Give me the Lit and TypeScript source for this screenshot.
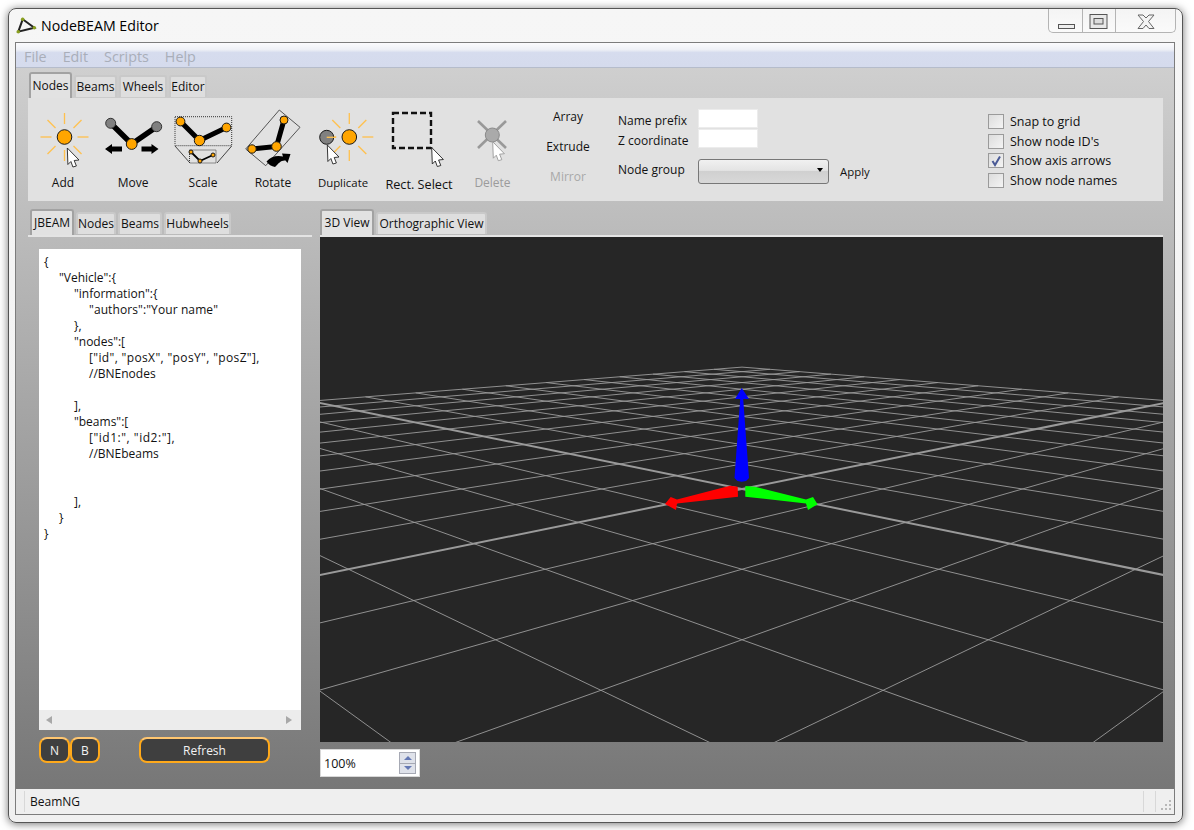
import { LitElement, html, css, svg } from "lit";
import { customElement } from "lit/decorators.js";

const cursor = (x: number, y: number, stroke = "#222", fill = "#fff") => svg`<path d="M${x} ${y} l11.7 12 l-4.8 .5 l2.2 5.5 l-3.5 1 l-2 -5.5 l-3 3 Z" fill=${fill} stroke=${stroke} stroke-width="0.9" stroke-linejoin="round"/>`;
const node = (x: number, y: number, r: number, fill = "#ffa500", stroke = "#1a1a1a") => svg`<circle cx=${x} cy=${y} r=${r} fill=${fill} stroke=${stroke} stroke-width="1"/>`;
const rays = (x: number, y: number) => {
  const o = [[0, -13, 0, -24], [0, 13, 0, 24], [-13, 0, -24, 0], [13, 0, 24, 0], [-9, -9, -17, -17], [9, -9, 17, -17], [-9, 9, -17, 17], [9, 9, 17, 17]];
  return o.map(([a, b, c, d]) => svg`<line x1=${x + a} y1=${y + b} x2=${x + c} y2=${y + d} stroke="#ffc04d" stroke-width="1.3"/>`);
};

const icons: Record<string, any> = {
  add: svg`<svg width="70" height="64" viewBox="28 106 70 64">${rays(64.5, 137)}${node(64.5, 137, 7.3)}${cursor(67.3, 148)}</svg>`,
  move: svg`<svg width="70" height="64" viewBox="98 106 70 64">
    <path d="M110.7 123.3 L131.7 144 L156.7 126.7" fill="none" stroke="#000" stroke-width="5.5"/>
    ${node(110.7, 123.3, 5, "#808080", "#333")}${node(156.7, 126.7, 5, "#808080", "#333")}${node(131.7, 144, 5.4)}
    <path d="M105 149 l7 -5 v2.5 h10 v5 h-10 v2.5 Z M158.5 149 l-7 -5 v2.5 h-10 v5 h10 v2.5 Z" fill="#000"/></svg>`,
  scale: svg`<svg width="70" height="64" viewBox="168 106 70 64">
    <rect x="175" y="116.7" width="56.7" height="29" fill="none" stroke="#333" stroke-width="1" stroke-dasharray="1 1"/>
    <path d="M175 146 L190 163 M231.7 146 L217 163" stroke="#444" stroke-width="1" fill="none"/>
    <rect x="189.5" y="150" width="26.5" height="13" fill="none" stroke="#333" stroke-width="1" stroke-dasharray="1 1"/>
    <path d="M180.5 121.5 L199.5 140.5 L226.5 127.5" fill="none" stroke="#000" stroke-width="5"/>
    <path d="M191 152 L200 161 L213 155" fill="none" stroke="#000" stroke-width="1.8"/>
    ${node(180.5, 121.5, 4.4)}${node(199.5, 140.5, 5.2)}${node(226.5, 127.5, 4.4)}
    ${node(191, 152, 2)}${node(200, 161, 2)}${node(213, 155, 2)}</svg>`,
  rotate: svg`<svg width="70" height="64" viewBox="238 106 70 64">
    <path d="M279.3 110 L300 127.3 L265.7 165.7 L245.7 149 Z" fill="none" stroke="#444" stroke-width="0.9"/>
    <path d="M284 120 L276.5 146.5 L252 149" fill="none" stroke="#000" stroke-width="5"/>
    ${node(284, 120, 4)}${node(276.5, 146.5, 4.8)}${node(252, 149, 4.2)}
    <path d="M266.5 161.5 C271 156.5 277 155 283 156.5 L282 153.5 L290.5 154 L287.5 163 L285.5 160.5 C281 160 279 163 275 167 C271.5 166.5 268.5 164.5 266.5 161.5 Z" fill="#000"/></svg>`,
  duplicate: svg`<svg width="70" height="64" viewBox="308 106 70 64">${rays(349.3, 137)}${node(326.7, 137.3, 7, "#808080")}
    <line x1="326.7" y1="137.3" x2="336" y2="137.3" stroke="#ffc04d" stroke-width="1.3"/>${node(349.3, 137, 7.3)}${cursor(327.3, 145)}</svg>`,
  rect: svg`<svg width="82" height="64" viewBox="378 106 82 64">
    <rect x="393" y="113" width="38" height="35" fill="none" stroke="#111" stroke-width="2.4" stroke-dasharray="6 3"/>${cursor(431.7, 147.5)}</svg>`,
  del: svg`<svg width="65" height="64" viewBox="460 106 65 64">
    <path d="M478 121 L506 148 M506 121 L478 148" stroke="#999" stroke-width="2.6"/>
    <circle cx="492.3" cy="135" r="7" fill="#aaa" stroke="#8a8a8a" stroke-width="1"/>${cursor(492.7, 141.7, "#999")}</svg>`,
};

const tools = [
  ["add", "Add", 70, ""], ["move", "Move", 70, ""], ["scale", "Scale", 70, ""], ["rotate", "Rotate", 70, ""],
  ["duplicate", "Duplicate", 70, "dup"], ["rect", "Rect. Select", 82, "low"], ["del", "Delete", 65, "off"],
];

const code: [number, string, string?][] = [
  [0, "{"], [1, '"Vehicle":{'], [2, '"information":{'], [3, '"authors":"Your name"', "wa"], [2, "},"], [2, '"nodes":['],
  [3, '["id", "posX", "posY", "posZ"],', "wb"], [3, "//BNEnodes"], [3, ""], [2, "],"], [2, '"beams":['], [3, '["id1:", "id2:"],', "wc"],
  [3, "//BNEbeams"], [3, ""], [3, ""], [2, "],"], [1, "}"], [0, "}"],
];

function grid() {
  const N = 11, yh = 290, G = 0.3523, A = 0.005025, S = 0.000361, cx = 742, minW = 0.0014;
  const P = (u: number, v: number) => { const w = A + S * (u + v); return [cx + (G * (u - v)) / w, yh + 1 / w]; };
  const out: any[] = [];
  for (let i = -N; i <= N; i++) {
    const start = Math.max(-N, (minW - A) / S - i);
    const cls = i === 0 ? "axis" : "thin";
    const a = P(i, start), b = P(i, N), c = P(start, i), d = P(N, i);
    out.push(svg`<line class=${cls} x1=${a[0]} y1=${a[1]} x2=${b[0]} y2=${b[1]}/>`);
    out.push(svg`<line class=${cls} x1=${c[0]} y1=${c[1]} x2=${d[0]} y2=${d[1]}/>`);
  }
  return out;
}

@customElement("tab-bar")
class TabBar extends LitElement {
  static properties = { items: { type: Array }, widths: { type: Array } };
  items: string[] = [];
  widths: number[] = [];
  static styles = css`
    :host { display: flex; align-items: flex-end; gap: 2px; height: 26px; font: 12px "Open Sans", sans-serif; color: #111; }
    .t { box-sizing: border-box; height: 22px; display: flex; align-items: center; justify-content: center; background: #dedede; border: 2px solid #c9c9c9; border-bottom: 0; border-radius: 3px 3px 0 0; white-space: nowrap; margin-bottom: 1px; padding-bottom: 2px; }
    .t.on { height: 26px; background: #e2e2e2; border-color: #a2a2a2; margin-bottom: 0; padding-bottom: 1px; }
  `;
  render() {
    return this.items.map((t, i) => html`<div class="t ${i === 0 ? "on" : ""}" style="width:${this.widths[i]}px">${t}</div>`);
  }
}

@customElement("app-root")
class AppRoot extends LitElement {
  static styles = css`
    :host { display: block; width: 1194px; height: 830px; background: #fff; font: 12px "Open Sans", sans-serif; color: #111; overflow: hidden; }
    .page { padding: 8px 11px 7px 8px; width: 1194px; height: 830px; box-sizing: border-box; }
    .window { box-sizing: border-box; height: 815px; border: 1px solid #555; border-radius: 8px; background: linear-gradient(#f6f6f6, #f0f0f0); box-shadow: 0 1px 8px rgba(0,0,0,.55); padding: 0 7px 7px 6px; display: flex; flex-direction: column; }
    .titlebar { height: 33px; flex: none; display: flex; align-items: flex-start; }
    .title { display: flex; align-items: center; gap: 4px; height: 33px; font-size: 14.2px; color: #000; flex: 1; }
    .ctrl { display: flex; height: 23px; border: 1px solid #b4b4b4; border-top: 0; border-radius: 0 0 5px 5px; margin-right: -1px; background: linear-gradient(#f4f4f4, #fafafa); }
    .ctrl div { display: flex; align-items: center; justify-content: center; border-right: 1px solid #b4b4b4; }
    .ctrl div:last-child { border-right: 0; }
    .w1 { width: 33px; } .w2 { width: 32px; } .w3 { width: 59px; }
    .client { flex: 1; display: flex; flex-direction: column; border: 1px solid #7c7c7c; min-height: 0; }
    .menu { height: 25px; flex: none; box-sizing: border-box; border-bottom: 1px solid #b5bccb; background: linear-gradient(#fbfbfd 0, #eef0f6 28%, #d6dcee 40%, #d5dbed 100%); display: flex; gap: 16px; padding: 3px 0 0 8px; font-size: 14.3px; color: #a9aeb9; align-items: center; }
    .main { flex: 1; min-height: 0; display: flex; flex-direction: column; background: linear-gradient(#cfcfcf, #777); padding: 4px 11px 0 12px; }
    .tabs-top { padding-left: 1px; }
    .toolbar { height: 103px; flex: none; background: #e1e1e1; display: flex; }
    .tool { flex: none; display: flex; flex-direction: column; align-items: center; padding-top: 8px; box-sizing: border-box; }
    .tool svg { display: block; flex: none; }
    .tool span { margin-top: 5px; line-height: 16px; white-space: nowrap; }
    .tool.low span { margin-top: 6px; font-size: 12.7px; }
    .tool.dup span { font-size: 11.4px; }
    .tool.off span { color: #9b9b9b; }
    .w70 { width: 70px; } .w82 { width: 82px; } .w65 { width: 65px; }
    .acts { width: 86px; flex: none; display: flex; flex-direction: column; align-items: center; padding-top: 11px; box-sizing: border-box; }
    .acts div { height: 30px; line-height: 16px; }
    .acts .off { color: #a8a8a8; }
    .form { margin-left: 7px; padding-top: 11px; display: grid; grid-template-columns: 80px 131px auto; grid-template-rows: 20px 20px 35px; grid-auto-rows: 20px; align-items: start; align-content: start; }
    .form .inp { width: 60px; height: 19px; background: #fff; border: 1px solid #ececec; box-sizing: border-box; }
    .form .sel { grid-row: 3; grid-column: 2; height: 25px; box-sizing: border-box; border: 1px solid #777; border-radius: 3px; background: linear-gradient(#f1f1f1, #e4e4e4 45%, #d0d0d0 50%, #d8d8d8); display: flex; align-items: center; justify-content: flex-end; padding-right: 5px; margin-top: 10px; }
    .arrow { width: 0; height: 0; border: 3.5px solid transparent; border-top: 4px solid #000; border-bottom: 0; margin-top: -3px; }
    .form .lbl { white-space: nowrap; line-height: 16px; padding-top: 4px; }
    .form .lblg { grid-row: 3; grid-column: 1; padding-top: 0; margin-top: 13px; }
    .form .apply { grid-row: 3; grid-column: 3; margin: 15px 0 0 11px; font-size: 11.4px; line-height: 16px; }
    .checks { margin-left: auto; width: 175px; flex: none; padding-top: 14px; display: flex; flex-direction: column; font-size: 12.5px; }
    .chk { height: 19.6px; display: flex; align-items: center; gap: 6px; white-space: nowrap; }
    .box { width: 16px; height: 15px; box-sizing: border-box; border: 1px solid #9a9a9a; background: linear-gradient(135deg, #dcdcdc, #f4f4f4); display: flex; align-items: center; justify-content: center; }
    .body { flex: 1; min-height: 0; display: flex; gap: 8px; padding-top: 8px; }
    .left { width: 284px; flex: none; display: flex; flex-direction: column; }
    .right { flex: 1; display: flex; flex-direction: column; min-width: 0; }
    .rule { height: 2px; background: #e4e4e4; flex: none; }
    .left .tabs { padding-left: 2px; }
    .right .tabs { padding-left: 0; }
    .editor { margin: 12px 0 0 11px; width: 262px; height: 481px; flex: none; background: #fff; display: flex; flex-direction: column; box-sizing: border-box; }
    .codebox { flex: 1; padding: 5px 0 0 5px; }
    .ln { height: 16px; line-height: 16px; white-space: pre; color: #111; }
    .wa { letter-spacing: .1px; } .wb { letter-spacing: .36px; } .wc { letter-spacing: .53px; }
    .l1 { padding-left: 15px; } .l2 { padding-left: 30px; } .l3 { padding-left: 45px; }
    .hbar { height: 20px; background: #ececec; display: flex; align-items: center; justify-content: space-between; padding: 0 9px 0 7px; flex: none; }
    .la { border: 4px solid transparent; border-left: 0; border-right: 6px solid #a8a8a8; }
    .ra { border: 4px solid transparent; border-right: 0; border-left: 6px solid #a8a8a8; }
    .btns { display: flex; margin: 7px 0 0 11px; }
    .pill { box-sizing: border-box; height: 26px; background: #3f3f3f; color: #f2f2f2; border: 2px solid #ffa91a; border-top-color: #ffc670; border-radius: 8px; display: flex; align-items: center; justify-content: center; }
    .n { width: 31px; } .b { width: 30px; } .r { width: 131px; margin-left: 39px; }
    .canvas { height: 505px; flex: none; background: #262626; display: block; }
    .canvas .thin { stroke: #9c9c9c; stroke-width: .9; }
    .canvas .axis { stroke: #9a9a9a; stroke-width: 2; }
    .spin { margin-top: 7px; width: 100px; height: 28px; box-sizing: border-box; background: #fff; border: 1px solid #d8d8d8; display: flex; align-items: center; justify-content: space-between; padding: 0 3px; }
    .spin .s { font-size: 12.5px; }
    .sbtn { width: 17px; height: 22px; box-sizing: border-box; border: 1px solid #a6a9b4; display: flex; flex-direction: column; background: #dfe2ea; }
    .sbtn i { flex: 1; display: flex; align-items: center; justify-content: center; border-bottom: 1px solid #a6a9b4; }
    .sbtn i:last-child { border-bottom: 0; }
    .up { border: 4px solid transparent; border-top: 0; border-bottom: 4px solid #6478b4; }
    .dn { border: 4px solid transparent; border-bottom: 0; border-top: 4px solid #6478b4; }
    .status { height: 25px; flex: none; background: #efefef; display: flex; align-items: center; }
    .sep { width: 1px; height: 21px; background: #d8d8d8; flex: none; }
    .pad { width: 8px; }
    .status .txt { flex: 1; padding-left: 5px; font-size: 12px; }
    .cell { width: 11px; }
    .grip { width: 18px; height: 21px; display: flex; align-items: flex-end; }
  `;

  render() {
    return html`<div class="page"><div class="window">
      <div class="titlebar">
        <div class="title">
          <svg width="22" height="22" viewBox="15 14 22 22"><path d="M22.7 18.3 L34.3 26.7 L18.3 30.7 Z" fill="none" stroke="#222" stroke-width="2"/><circle cx="22.7" cy="18.3" r="1.8" fill="#8aa020"/><circle cx="34.3" cy="26.7" r="1.8" fill="#8aa020"/><circle cx="18.3" cy="30.7" r="1.8" fill="#8aa020"/></svg>
          <span>NodeBEAM Editor</span>
        </div>
        <div class="ctrl">
          <div class="w1"><svg width="33" height="22" viewBox="0 0 33 22"><rect x="9.5" y="14.5" width="16" height="4" fill="#eee" stroke="#555"/></svg></div>
          <div class="w2"><svg width="32" height="22" viewBox="0 0 32 22"><rect x="7" y="4.5" width="17" height="14" fill="#e8e8e8" stroke="#555"/><rect x="11" y="8.5" width="9" height="5.5" fill="#ddd" stroke="#555"/></svg></div>
          <div class="w3"><svg width="59" height="22" viewBox="0 0 59 22"><path d="M22 5 h5 l3 3 l3 -3 h5 l-5.5 6.5 l5.5 7 h-5 l-3 -3.5 l-3 3.5 h-5 l5.5 -7 Z" fill="#f4f4f4" stroke="#666"/></svg></div>
        </div>
      </div>
      <div class="client">
        <div class="menu"><span>File</span><span>Edit</span><span>Scripts</span><span>Help</span></div>
        <div class="main">
          <tab-bar class="tabs-top" .items=${["Nodes", "Beams", "Wheels", "Editor"]} .widths=${[43, 43, 48, 38]}></tab-bar>
          <div class="toolbar">
            ${tools.map(([k, l, w, c]) => html`<div class="tool w${w} ${c}">${icons[k as string]}<span>${l}</span></div>`)}
            <div class="acts"><div>Array</div><div>Extrude</div><div class="off">Mirror</div></div>
            <div class="form">
              <div class="lbl">Name prefix</div><div class="inp"></div><div></div>
              <div class="lbl">Z coordinate</div><div class="inp"></div><div></div>
              <div class="lbl lblg">Node group</div><div class="sel"><span class="arrow"></span></div><div class="apply">Apply</div>
            </div>
            <div class="checks">
              <div class="chk"><span class="box"></span>Snap to grid</div>
              <div class="chk"><span class="box"></span>Show node ID's</div>
              <div class="chk"><span class="box"><svg width="12" height="12" viewBox="0 0 12 12"><path d="M2.5 6 L5 10 L10 1.5" fill="none" stroke="#4a5a96" stroke-width="2"/></svg></span>Show axis arrows</div>
              <div class="chk"><span class="box"></span>Show node names</div>
            </div>
          </div>
          <div class="body">
            <div class="left">
              <tab-bar class="tabs" .items=${["JBEAM", "Nodes", "Beams", "Hubwheels"]} .widths=${[44, 40, 44, 67]}></tab-bar>
              <div class="rule"></div>
              <div class="editor">
                <div class="codebox">${code.map(([i, t, w]) => html`<div class="ln ${i ? "l" + i : ""} ${w ?? ""}">${t}</div>`)}</div>
                <div class="hbar"><span class="la"></span><span class="ra"></span></div>
              </div>
              <div class="btns"><div class="pill n">N</div><div class="pill b">B</div><div class="pill r">Refresh</div></div>
            </div>
            <div class="right">
              <tab-bar class="tabs" .items=${["3D View", "Orthographic View"]} .widths=${[54, 111]}></tab-bar>
              <div class="rule"></div>
              <svg class="canvas" width="843" height="505" viewBox="320 237 843 505">
                ${grid()}
                <path d="M741.7 388 L749 399 L743.2 399 L749 478 L746 481 L741.7 481.7 L737.4 481 L734.5 478 L740.2 399 L735 399 Z" fill="#0000ff"/>
                <path d="M730 485.7 L737.7 486.7 L738 496.7 L677 503.5 L676 510 L665 504 L670.7 497 L677 499.5 Z" fill="#ff0000"/>
                <path d="M745.3 486 L755 486.7 L806 499.5 L813 497 L817.5 504.3 L808 510 L806 503.5 L745.3 496.7 Z" fill="#00ff00"/>
              </svg>
              <div class="spin"><span class="s">100%</span><div class="sbtn"><i><b class="up"></b></i><i><b class="dn"></b></i></div></div>
            </div>
          </div>
        </div>
        <div class="status">
          <div class="pad"></div><div class="sep"></div>
          <div class="txt">BeamNG</div>
          <div class="sep"></div><div class="cell"></div><div class="sep"></div>
          <div class="grip"><svg width="18" height="21" viewBox="0 0 18 21"><g fill="#b8b8b8"><rect x="13" y="9" width="2" height="2"/><rect x="9" y="13" width="2" height="2"/><rect x="13" y="13" width="2" height="2"/><rect x="5" y="17" width="2" height="2"/><rect x="9" y="17" width="2" height="2"/><rect x="13" y="17" width="2" height="2"/></g></svg></div>
        </div>
      </div>
    </div></div>`;
  }
}
